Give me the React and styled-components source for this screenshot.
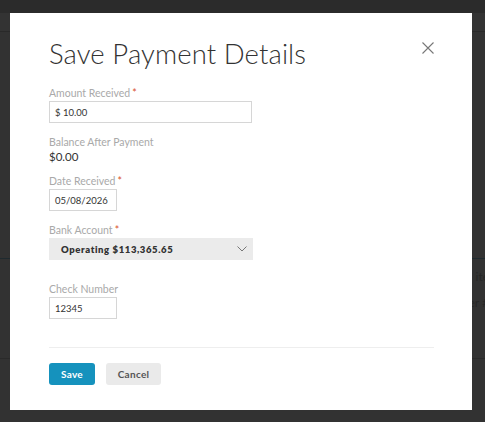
import React from "react";
import styled, { createGlobalStyle } from "styled-components";

const Global = createGlobalStyle`
  html, body { margin: 0; padding: 0; }
  body {
    width: 485px;
    height: 422px;
    overflow: hidden;
    background: #333333;
    font-family: Lato, "Open Sans", "Liberation Sans", sans-serif;
  }
`;

const Page = styled.div`
  position: relative;
  width: 485px;
  height: 422px;
  background: #323232;
  display: flex;
  flex-direction: column;
`;

const TopBar = styled.div`
  height: 13px;
  background: #2b2b2b;
`;

const SubBar = styled.div`
  height: 18px;
  border-bottom: 1px solid #292929;
  background: #333333;
`;

const Spacer = styled.div`
  height: ${(p) => p.$h}px;
`;

const Section = styled.div`
  border-top: 1px solid #1f2a2f;
  border-bottom: 1px solid #2a2a2a;
  height: 101px;
  display: flex;
  flex-direction: column;
  align-items: flex-end;
  padding-top: 12px;
  gap: 14px;
  box-sizing: border-box;
`;

const GhostText = styled.span`
  font-size: 12px;
  color: #262626;
  margin-right: -4px;
  line-height: 12px;
`;

const Modal = styled.div`
  position: absolute;
  left: 10px;
  top: 13px;
  width: 462px;
  height: 397px;
  background: #ffffff;
  box-sizing: border-box;
  padding: 25px 38px 0 39px;
  display: flex;
  flex-direction: column;
`;

const Header = styled.div`
  display: flex;
  justify-content: space-between;
  align-items: flex-start;
`;

const Title = styled.h1`
  margin: 0;
  font-weight: 300;
  font-size: 27.5px;
  line-height: 32px;
  color: #333333;
  letter-spacing: 0.1px;
`;

const Close = styled.button`
  border: 0;
  background: none;
  padding: 0;
  margin-top: 4px;
  width: 12px;
  height: 12px;
  display: flex;
  cursor: pointer;
`;

const Field = styled.div`
  display: flex;
  flex-direction: column;
  margin-top: ${(p) => p.$mt}px;
`;

const Label = styled.label`
  font-size: 10.5px;
  line-height: 12px;
  color: #a9a9a9;
  margin-bottom: 2px;
`;

const Req = styled.span`
  color: #d9532c;
  margin-left: 2px;
`;

const Input = styled.div`
  width: ${(p) => p.$w}px;
  height: 22px;
  box-sizing: border-box;
  border: 1px solid #d6d6d6;
  display: flex;
  align-items: center;
  padding-left: 5px;
  font-size: 9.5px;
  color: #333;
`;

const Value = styled.div`
  font-size: 11.5px;
  color: #333;
  line-height: 14px;
`;

const Select = styled.div`
  width: 204px;
  height: 22px;
  background: #ebebeb;
  box-sizing: border-box;
  display: flex;
  align-items: center;
  justify-content: space-between;
  padding: 0 6px 0 12px;
  font-size: 9.5px;
  font-weight: 800;
  letter-spacing: 0.6px;
  color: #333;
`;

const Divider = styled.hr`
  border: 0;
  border-top: 1px solid #eeeeee;
  margin: 28px 0 0 0;
`;

const Actions = styled.div`
  display: flex;
  gap: 11px;
  margin-top: 15px;
`;

const Button = styled.button`
  height: 22px;
  width: ${(p) => p.$w}px;
  border: 0;
  border-radius: 3px;
  font-family: inherit;
  font-size: 10px;
  font-weight: 700;
  letter-spacing: 0.3px;
  background: ${(p) => (p.$primary ? "#1592bd" : "#eaeaea")};
  color: ${(p) => (p.$primary ? "#ffffff" : "#555555")};
  cursor: pointer;
`;

export default function App() {
  return (
    <>
      <Global />
      <Page>
        <TopBar />
        <SubBar />
        <Spacer $h={226} />
        <Section>
          <GhostText>ite</GhostText>
          <GhostText>er #</GhostText>
        </Section>
        <Modal>
          <Header>
            <Title>Save Payment Details</Title>
            <Close aria-label="Close">
              <svg width="12" height="12" viewBox="0 0 12 12">
                <path d="M0.5 0.5L11.5 11.5M11.5 0.5L0.5 11.5" stroke="#777" strokeWidth="1.1" fill="none" />
              </svg>
            </Close>
          </Header>
          <Field $mt={17}>
            <Label>Amount Received<Req>*</Req></Label>
            <Input $w={203}>$ 10.00</Input>
          </Field>
          <Field $mt={13}>
            <Label>Balance After Payment</Label>
            <Value>$0.00</Value>
          </Field>
          <Field $mt={11}>
            <Label>Date Received<Req>*</Req></Label>
            <Input $w={68}>05/08/2026</Input>
          </Field>
          <Field $mt={13}>
            <Label>Bank Account<Req>*</Req></Label>
            <Select>
              <span>Operating $113,365.65</span>
              <svg width="10" height="6" viewBox="0 0 10 6">
                <path d="M0.5 0.5L5 5L9.5 0.5" stroke="#777" strokeWidth="1" fill="none" />
              </svg>
            </Select>
          </Field>
          <Field $mt={23}>
            <Label>Check Number</Label>
            <Input $w={68}>12345</Input>
          </Field>
          <Divider />
          <Actions>
            <Button $primary $w={46}>Save</Button>
            <Button $w={55}>Cancel</Button>
          </Actions>
        </Modal>
      </Page>
    </>
  );
}
